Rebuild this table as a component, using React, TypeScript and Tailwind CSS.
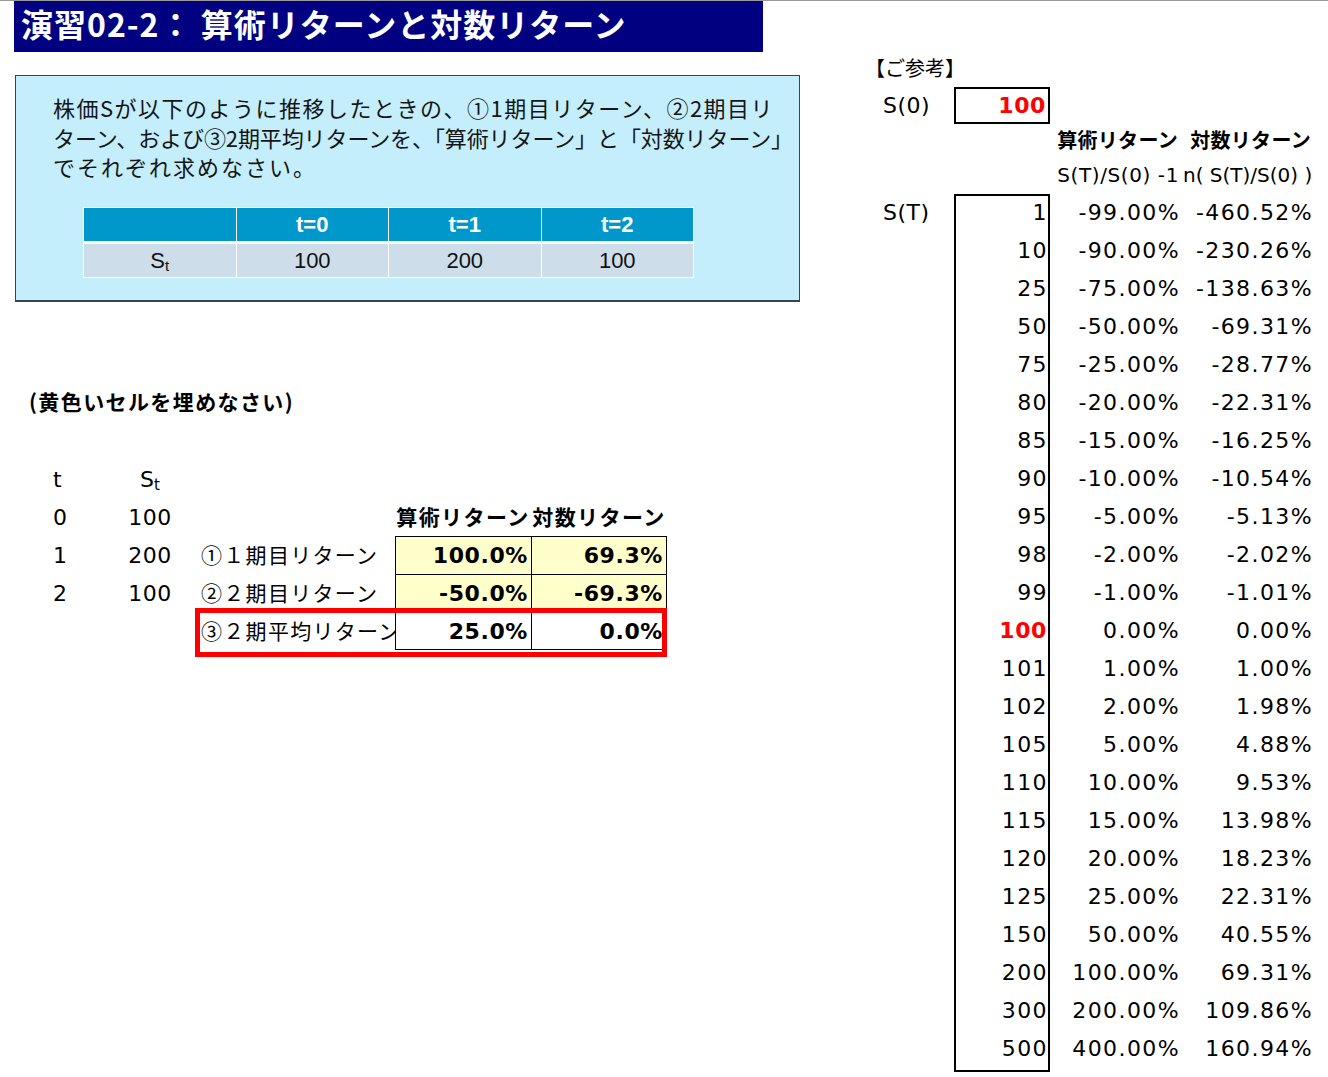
import React from "react";

const JP = "font-['Noto_Sans_CJK_JP',sans-serif]";
const DV = "font-['DejaVu_Sans',sans-serif]";
const AR = "font-['Liberation_Sans',sans-serif]";

const rightRows: [number, string, string][] = [
  [1, "-99.00%", "-460.52%"],
  [10, "-90.00%", "-230.26%"],
  [25, "-75.00%", "-138.63%"],
  [50, "-50.00%", "-69.31%"],
  [75, "-25.00%", "-28.77%"],
  [80, "-20.00%", "-22.31%"],
  [85, "-15.00%", "-16.25%"],
  [90, "-10.00%", "-10.54%"],
  [95, "-5.00%", "-5.13%"],
  [98, "-2.00%", "-2.02%"],
  [99, "-1.00%", "-1.01%"],
  [100, "0.00%", "0.00%"],
  [101, "1.00%", "1.00%"],
  [102, "2.00%", "1.98%"],
  [105, "5.00%", "4.88%"],
  [110, "10.00%", "9.53%"],
  [115, "15.00%", "13.98%"],
  [120, "20.00%", "18.23%"],
  [125, "25.00%", "22.31%"],
  [150, "50.00%", "40.55%"],
  [200, "100.00%", "69.31%"],
  [300, "200.00%", "109.86%"],
  [500, "400.00%", "160.94%"],
];

const lowerRows = [
  { t: "0", s: "100" },
  { t: "1", s: "200", label: "①１期目リターン", a: "100.0%", b: "69.3%", yellow: true },
  { t: "2", s: "100", label: "②２期目リターン", a: "-50.0%", b: "-69.3%", yellow: true },
  { t: "", s: "", label: "③２期平均リターン", a: "25.0%", b: "0.0%", yellow: false },
];

export default function App() {
  return (
    <div className="w-[1328px] min-h-[1077px] bg-white text-black overflow-hidden">
      <div className="h-px bg-[#9a9a9a]" />
      <div className="flex">
        {/* LEFT */}
        <div className="w-[860px] shrink-0">
          <div className="ml-[14px] w-[749px] h-[51px] bg-[#000080] flex items-center pl-[7px] pb-[8px]">
            <span
              className={`${JP} text-[32px] font-bold text-white tracking-[1px] leading-none whitespace-nowrap`}
            >
              演習02-2： 算術リターンと対数リターン
            </span>
          </div>

          <div className="ml-[15px] mt-[23px] w-[785px] h-[227px] bg-[#c4eefc] border border-b-2 border-[#34454b] pt-[17px] pl-[37px]">
            <div className={`${JP} text-[22px] leading-[29.5px] whitespace-nowrap text-[#151515]`}>
              <span className="block tracking-[1.5px]">
                株価Sが以下のように推移したときの、①1期目リターン、②2期目リ
              </span>
              <span className="block tracking-[-0.1px]">
                ターン、および③2期平均リターンを、「算術リターン」と「対数リターン」
              </span>
              <span className="block tracking-[2px]">でそれぞれ求めなさい。</span>
            </div>
            <div className="ml-[30px] mt-[25px] w-[611px] bg-white p-px grid grid-cols-4 gap-x-px gap-y-[3px]">
              <div className="h-[33px] bg-[#0098ca]" />
              {["t=0", "t=1", "t=2"].map((h) => (
                <div
                  key={h}
                  className={`h-[33px] bg-[#0098ca] flex items-center justify-center ${AR} text-[22px] font-bold text-white`}
                >
                  {h}
                </div>
              ))}
              <div className={`h-[33px] bg-[#cddeea] flex items-center justify-center ${AR} text-[22px] text-[#111]`}>
                <span>
                  S<sub className="text-[15px]">t</sub>
                </span>
              </div>
              {["100", "200", "100"].map((v, i) => (
                <div
                  key={i}
                  className={`h-[33px] bg-[#cddeea] flex items-center justify-center ${AR} text-[22px] text-[#111]`}
                >
                  {v}
                </div>
              ))}
            </div>
          </div>

          <div className="mt-[81px] h-[38px] flex items-center pl-[29px]">
            <span className={`${JP} text-[21px] font-bold tracking-[1.4px] whitespace-nowrap`}>
              (黄色いセルを埋めなさい)
            </span>
          </div>

          <div className="relative mt-[39px] pl-[53px]">
            <div className={`flex h-[38px] items-center ${DV} text-[22px]`}>
              <div className="w-[47px]">t</div>
              <div className="w-[100px] text-center">
                S<sub className="text-[15px]">t</sub>
              </div>
            </div>
            {lowerRows.map((r, i) => (
              <div key={i} className="flex h-[38px]">
                <div className={`w-[47px] flex items-center ${DV} text-[22px]`}>{r.t}</div>
                <div className={`w-[100px] flex items-center justify-center ${DV} text-[22px] tracking-[0.5px]`}>
                  {r.s}
                </div>
                <div
                  className={`w-[195px] flex items-center overflow-hidden whitespace-nowrap pl-[1px] ${JP} text-[21px] tracking-[1.3px]`}
                >
                  {r.label ?? ""}
                </div>
                {i === 0 ? (
                  <>
                    <div
                      className={`w-[136px] flex items-center justify-center whitespace-nowrap ${JP} text-[21px] font-bold tracking-[1.4px]`}
                    >
                      算術リターン
                    </div>
                    <div
                      className={`w-[136px] flex items-center justify-center whitespace-nowrap ${JP} text-[21px] font-bold tracking-[1.4px]`}
                    >
                      対数リターン
                    </div>
                  </>
                ) : (
                  <>
                    <div
                      className={`w-[136px] border-l border-t border-black ${
                        i === 3 ? "border-b" : ""
                      } ${r.yellow ? "bg-[#ffffcc]" : "bg-white"} flex items-center justify-end pr-[3px] ${DV} text-[22px] font-bold tracking-[0.6px]`}
                    >
                      {r.a}
                    </div>
                    <div
                      className={`w-[136px] border-l border-r border-t border-black ${
                        i === 3 ? "border-b" : ""
                      } ${r.yellow ? "bg-[#ffffcc]" : "bg-white"} flex items-center justify-end pr-[3px] ${DV} text-[22px] font-bold tracking-[0.6px]`}
                    >
                      {r.b}
                    </div>
                  </>
                )}
              </div>
            ))}
            <div className="absolute left-[195px] top-[148px] w-[472px] h-[49px] border-[5px] border-[#ff0000]" />
          </div>
        </div>

        {/* RIGHT */}
        <div className="pt-[47px]">
          <div className={`h-[39px] flex items-center pl-[5px] ${JP} text-[20px] whitespace-nowrap`}>【ご参考】</div>
          <div className="flex h-[37px]">
            <div className={`w-[94px] pl-[23px] flex items-center ${DV} text-[22px] tracking-[0.5px]`}>S(0)</div>
            <div
              className={`w-[96px] border-2 border-black flex items-center justify-end pr-[2px] text-[#ff0000] font-bold ${DV} text-[22px] tracking-[0.6px]`}
            >
              100
            </div>
          </div>
          <div className="flex h-[32px] items-center">
            <div className="w-[190px]" />
            <div className={`w-[130px] text-right pr-[2px] ${JP} text-[20px] font-bold whitespace-nowrap tracking-[0.3px]`}>
              算術リターン
            </div>
            <div className={`w-[133px] text-right pr-[2px] ${JP} text-[20px] font-bold whitespace-nowrap tracking-[0.3px]`}>
              対数リターン
            </div>
          </div>
          <div className="flex h-[38px] items-center">
            <div className="w-[190px]" />
            <div className={`w-[130px] text-right pr-[1px] ${DV} text-[20px] tracking-[0.6px] whitespace-nowrap`}>
              S(T)/S(0) -1
            </div>
            <div className={`w-[133px] pl-[3px] ${DV} text-[20px] whitespace-nowrap`}>n( S(T)/S(0) )</div>
          </div>
          <div className="flex">
            <div className="w-[94px] pl-[23px] pt-[2px]">
              <div className={`h-[38px] flex items-center pb-[5px] ${DV} text-[22px] tracking-[0.5px]`}>S(T)</div>
            </div>
            <div className="w-[96px] border-2 border-black">
              {rightRows.map(([v]) => (
                <div
                  key={v}
                  className={`h-[38px] flex items-center justify-end pb-[5px] ${DV} text-[22px] ${
                    v === 100 ? "text-[#ff0000] font-bold tracking-[0.6px] pr-[1px]" : "tracking-[1.4px]"
                  }`}
                >
                  {v}
                </div>
              ))}
            </div>
            <div className="w-[130px] pt-[2px]">
              {rightRows.map(([v, a]) => (
                <div
                  key={v}
                  className={`h-[38px] flex items-center justify-end pb-[5px] ${DV} text-[22px] tracking-[1.4px] whitespace-nowrap`}
                >
                  {a}
                </div>
              ))}
            </div>
            <div className="w-[133px] pt-[2px]">
              {rightRows.map(([v, , b]) => (
                <div
                  key={v}
                  className={`h-[38px] flex items-center justify-end pb-[5px] ${DV} text-[22px] tracking-[1.4px] whitespace-nowrap`}
                >
                  {b}
                </div>
              ))}
            </div>
          </div>
        </div>
      </div>
    </div>
  );
}
